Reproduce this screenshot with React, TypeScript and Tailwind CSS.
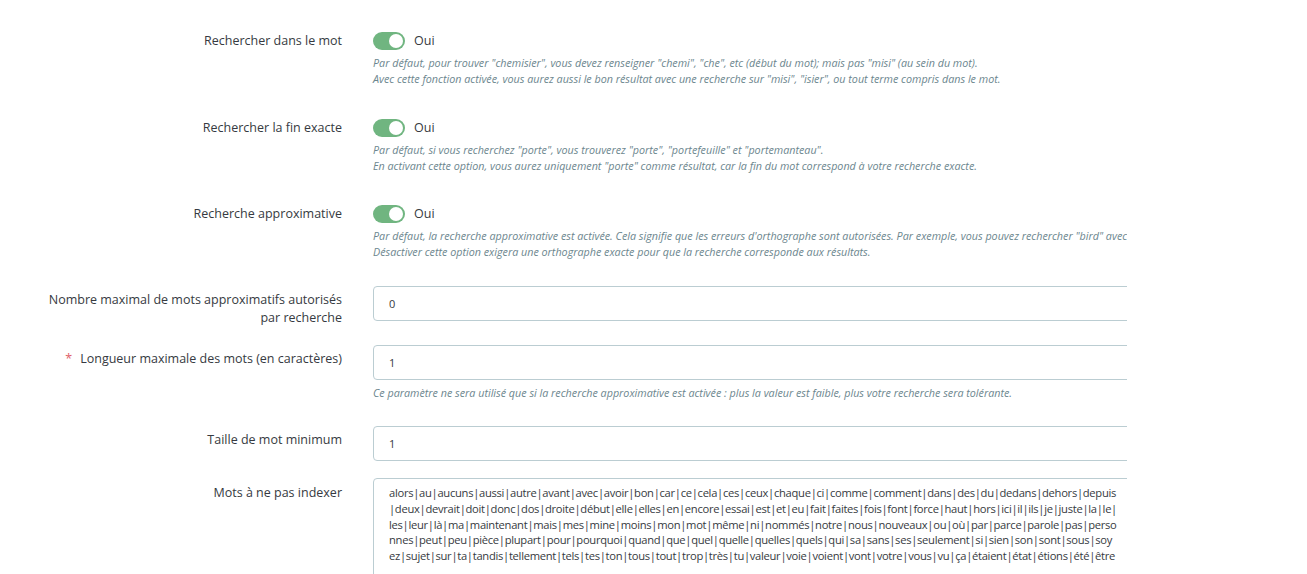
import React from "react";

const STOP_WORDS =
  "alors|au|aucuns|aussi|autre|avant|avec|avoir|bon|car|ce|cela|ces|ceux|chaque|ci|comme|comment|dans|des|du|dedans|dehors|depuis|deux|devrait|doit|donc|dos|droite|début|elle|elles|en|encore|essai|est|et|eu|fait|faites|fois|font|force|haut|hors|ici|il|ils|je|juste|la|le|les|leur|là|ma|maintenant|mais|mes|mine|moins|mon|mot|même|ni|nommés|notre|nous|nouveaux|ou|où|par|parce|parole|pas|personnes|peut|peu|pièce|plupart|pour|pourquoi|quand|que|quel|quelle|quelles|quels|qui|sa|sans|ses|seulement|si|sien|son|sont|sous|soyez|sujet|sur|ta|tandis|tellement|tels|tes|ton|tous|tout|trop|très|tu|valeur|voie|voient|vont|votre|vous|vu|ça|étaient|état|étions|été|être";

const Toggle = () => (
  <div className="flex items-center h-[18px]">
    <span className="relative inline-block w-[32px] h-[18px] rounded-full bg-[#70b580]">
      <span className="absolute right-[2px] top-[2px] w-[14px] h-[14px] rounded-full bg-white" />
    </span>
    <span className="ml-[9px] text-[12.5px] text-[#363a41]">Oui</span>
  </div>
);

const Help = ({ lines }: { lines: string[] }) => (
  <div className="mt-[5px] text-[10.75px] italic leading-[16px] text-[#6c868e] whitespace-nowrap">
    {lines.map((l, i) => (
      <div key={i}>{l}</div>
    ))}
  </div>
);

const Row = ({
  label,
  required,
  top,
  children,
  className,
}: {
  label: React.ReactNode;
  required?: boolean;
  top?: string;
  children: React.ReactNode;
  className?: string;
}) => (
  <div className={"flex " + (className ?? "")}>
    <label className={"w-[342px] shrink-0 pl-[45px] text-right text-[12.5px] leading-[18px] text-[#363a41] " + (top ?? "")}>
      {required && <span className="text-[#e0616a] mr-[8px]">*</span>}
      {label}
    </label>
    <div className="ml-[31px] w-[760px] shrink-0">{children}</div>
  </div>
);

const inputCls =
  "block w-full h-[35px] px-[15px] border border-[#bbcdd2] rounded-[4px] text-[11px] text-[#363a41] bg-white outline-none";

export default function App() {
  return (
    <div className="min-h-screen bg-white" style={{ fontFamily: '"Open Sans", sans-serif' }}>
      <div className="w-[1127px] overflow-hidden pt-[32px]">
        <Row label="Rechercher dans le mot">
          <Toggle />
          <Help
            lines={[
              'Par défaut, pour trouver "chemisier", vous devez renseigner "chemi", "che", etc (début du mot); mais pas "misi" (au sein du mot).',
              'Avec cette fonction activée, vous aurez aussi le bon résultat avec une recherche sur "misi", "isier", ou tout terme compris dans le mot.',
            ]}
          />
        </Row>

        <Row label="Rechercher la fin exacte" className="mt-[32px]">
          <Toggle />
          <Help
            lines={[
              'Par défaut, si vous recherchez "porte", vous trouverez "porte", "portefeuille" et "portemanteau".',
              'En activant cette option, vous aurez uniquement "porte" comme résultat, car la fin du mot correspond à votre recherche exacte.',
            ]}
          />
        </Row>

        <Row label="Recherche approximative" className="mt-[31px]">
          <Toggle />
          <Help
            lines={[
              'Par défaut, la recherche approximative est activée. Cela signifie que les erreurs d\'orthographe sont autorisées. Par exemple, vous pouvez rechercher "bird" avec "burd", "bird" ou "bribd".',
              "Désactiver cette option exigera une orthographe exacte pour que la recherche corresponde aux résultats.",
            ]}
          />
        </Row>

        <Row
          label="Nombre maximal de mots approximatifs autorisés par recherche"
          top="pt-[5px]"
          className="mt-[26px]"
        >
          <input className={inputCls} defaultValue="0" />
        </Row>

        <Row
          label="Longueur maximale des mots (en caractères)"
          required
          top="pt-[5px]"
          className="mt-[18px]"
        >
          <input className={inputCls} defaultValue="1" />
          <Help
            lines={[
              "Ce paramètre ne sera utilisé que si la recherche approximative est activée : plus la valeur est faible, plus votre recherche sera tolérante.",
            ]}
          />
        </Row>

        <Row label="Taille de mot minimum" top="pt-[5px]" className="mt-[25px]">
          <input className={inputCls} defaultValue="1" />
        </Row>

        <Row label="Mots à ne pas indexer" top="pt-[6px]" className="mt-[17px]">
          <textarea
            className="block w-full h-[140px] px-[15px] pt-[6px] border border-[#bbcdd2] rounded-[4px] text-[11.2px] tracking-[-0.29px] leading-[15.8px] text-[#363a41] bg-white outline-none resize-none break-all"
            defaultValue={STOP_WORDS}
          />
        </Row>
      </div>
    </div>
  );
}
